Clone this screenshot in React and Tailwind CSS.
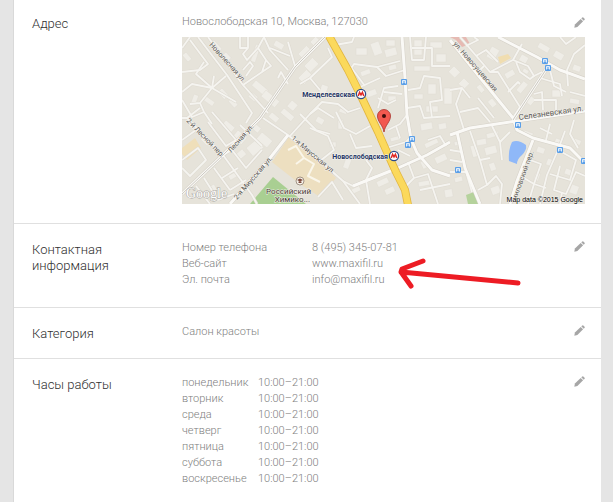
const hours = [
    "понедельник",
    "вторник",
    "среда",
    "четверг",
    "пятница",
    "суббота",
    "воскресенье"
];

const roads = [
    "M182 48 L190 37 M190 40 L208 64 L200 70 L182 72",
    "M208 37 L243 85 L268 113",
    "M198 37 L227 75 L252 113 L246 123",
    "M204 62 L196 74 L212 88 L226 76",
    "M182 92 L192 84 L212 88 L236 102 M212 88 L200 103 L190 104 M212 88 L214 76",
    "M182 100 L192 117 L204 112 L212 124 M200 103 L204 112",
    "M240 37 V48 H248 V37 M248 48 L243 54 L247 60 L258 48 L264 37",
    "M243 85 L262 72 L271 66 L266 60 M258 48 L266 60 L262 72",
    "M243 70 L250 62 L253 66 L246 76",
    "M264 37 L270 50 L288 70 M278 78 L281 72 L288 84",
    "M270 48 L290 56 M288 42 L295 66",
    "M182 118 L187 118 L223 155 L252 195 L257 204",
    "M187 118 L200 108 M182 140 L196 130 L214 146",
    "M182 160 L198 148 L206 160 L190 176 L182 168",
    "M208 122 L226 146 L236 140 L212 112",
    "M223 155 L232 150 L246 168 L262 150",
    "M214 168 L230 190 M204 178 L218 200 M196 186 L210 204",
    "M222 178 L238 168 M230 190 L246 180 M218 200 L234 194",
    "M240 125 L262 146 M263 118 L288 135 L320 161 L343 181 L360 204",
    "M290 136 L310 114 L318 108 L334 118 M300 114 L316 130 L330 134",
    "M310 78 L332 57 L328 48 M320 90 L310 78 L300 84",
    "M310 114 L322 102 L338 104 L348 112 L360 108",
    "M336 112 L344 128 L356 134 L370 126",
    "M310 128 L328 136 L334 150 L320 161",
    "M343 181 L353 186 L376 176 M350 134 L356 148 L372 146",
    "M366 160 L372 168 L366 180 L370 204",
    "M318 197 L332 182 L343 200",
    "M348 73 L354 64 L377 67 L400 61 M358 88 L380 78 M350 66 L365 86",
    "M335 45 L352 42 L354 37 M377 67 L386 76 L405 70",
    "M378 108 L384 88 L398 86 M384 92 L402 94 M378 98 L388 104 L396 100",
    "M410 37 L412 60 L424 60 L426 37 M412 48 H432 V66 H450",
    "M408 90 L420 88 L424 76 L440 78 L442 100 L430 102 L432 118",
    "M407 108 L420 106 L424 118 L450 116 M388 130 L400 124 L407 115",
    "M386 148 L406 142 L410 138 M398 150 L410 156 M396 126 L400 138",
    "M408 162 L414 178 L406 186 L410 204 M414 178 L428 174 L438 204",
    "M420 190 L450 184 M428 140 L440 136 L446 146",
    "M460 37 L490 72 L498 72 L520 107 L513 118",
    "M466 46 L478 40 L474 37 M476 56 L486 50 L498 62",
    "M490 72 L513 60 L522 44",
    "M513 60 L528 66 L534 76 L530 79 L520 72 L516 62",
    "M532 77 L542 72 M484 66 L478 72 L494 86",
    "M508 92 L518 82 L520 84 M534 94 L542 92 L543 110 M534 100 H556 V112 M550 70 L554 86 L566 92",
    "M585 45 L574 54 L567 70 L568 86 M560 37 L566 44 L576 37",
    "M540 78 L560 84 L562 96 M570 92 L585 96",
    "M450 90 L462 88 L456 104 L464 130 M462 88 L470 98 M478 98 L494 118",
    "M460 112 L478 108 L490 122",
    "M470 131 L480 160 L487 185 L496 176 L502 184 L500 204",
    "M487 185 L478 190 M480 160 L490 158 M450 150 L462 152 M450 160 L462 162 M450 172 L466 172 L472 192",
    "M492 126 L500 142 L510 132 M500 142 L502 160",
    "M565 131 L558 150 L547 175 L540 204 M558 150 L576 160 L570 180 L550 174",
    "M530 160 L541 164 L534 184 L546 188 M524 178 L534 184 L528 204",
    "M540 128 L552 134 M550 124 L546 140 M574 120 L570 134 L578 148",
    "M560 166 L554 190 L566 194 L576 172 L585 176 M562 192 L560 204"
];

const mainRoads = [
    "M325 37 L295 67 L260 118 L223 155 L182 194",
    "M288 135 L270 158 L230 204",
    "M353 186 L398 168 L427 155 L450 142",
    "M402 37 L405 78 L407 115 L411 139 L417 153 L432 170 L450 176",
    "M450 135 L470 128 L517 121 L585 111",
    "M450 40 L482 80 L513 118 L517 130 L533 138 L570 148 L585 163",
    "M498 37 L537 57 L560 70 L585 79",
    "M457 132 L465 168 L480 204",
    "M547 68 L513 120",
    "M533 140 L517 181 L510 204"
];

// x, y, width, height, rotation
const buildings = [
    [186, 52, 9, 5, 50], [214, 40, 12, 5, 48], [226, 52, 8, 6, 48], [256, 44, 5, 18, 18],
    [222, 88, 10, 6, 48], [232, 98, 9, 5, 48], [194, 94, 5, 10, 20], [206, 96, 11, 5, 35],
    [256, 80, 16, 7, 40], [266, 90, 18, 8, 40], [252, 92, 8, 6, 40], [276, 40, 10, 6, 30],
    [298, 54, 12, 7, -45], [304, 66, 12, 9, -45], [298, 78, 12, 9, -45], [310, 42, 8, 5, -45],
    [284, 108, 14, 6, 40], [272, 112, 10, 6, 40], [292, 100, 8, 8, 40], [322, 84, 7, 12, 20],
    [192, 122, 9, 5, 45], [204, 136, 9, 5, 45], [226, 120, 12, 7, 40], [238, 130, 12, 9, 40],
    [246, 148, 14, 11, -40], [262, 132, 14, 9, 40], [236, 154, 8, 7, -40], [256, 124, 7, 6, 40],
    [200, 190, 8, 5, 60], [214, 184, 8, 4, 60], [228, 176, 9, 5, -30], [240, 184, 8, 4, -30],
    [318, 116, 8, 6, 30], [338, 120, 5, 9, 0], [330, 142, 6, 5, 0], [346, 158, 6, 10, 20],
    [350, 190, 10, 5, -25], [376, 182, 12, 6, -25], [384, 190, 10, 6, -25], [340, 108, 8, 4, 20],
    [356, 48, 11, 7, 0], [370, 44, 9, 13, -20], [384, 50, 12, 8, -15], [386, 40, 9, 6, 0],
    [360, 72, 10, 5, -20], [388, 66, 8, 5, -15], [366, 92, 10, 6, -20], [388, 96, 8, 5, 0],
    [414, 40, 8, 15, 0], [430, 42, 12, 6, 0], [436, 54, 10, 8, 0], [414, 66, 16, 5, 0],
    [414, 94, 9, 5, 0], [428, 84, 8, 10, 0], [444, 88, 8, 16, 0], [426, 106, 12, 6, 0],
    [420, 124, 12, 7, -10], [438, 124, 8, 6, -10], [390, 138, 10, 4, -15], [424, 144, 14, 5, -25],
    [420, 162, 6, 8, -25], [434, 158, 12, 7, -25], [418, 182, 12, 5, -10], [444, 190, 8, 8, -10],
    [466, 54, 8, 6, 45], [492, 46, 9, 12, 30], [480, 84, 8, 5, 50], [492, 98, 8, 6, 50],
    [504, 74, 10, 6, -30], [522, 54, 8, 7, 30], [516, 90, 12, 6, -50], [524, 68, 6, 4, 30],
    [540, 42, 12, 6, 30], [556, 50, 10, 7, 30], [574, 64, 8, 6, 20], [552, 90, 9, 7, 0],
    [570, 98, 10, 5, 10], [526, 102, 8, 6, -50], [454, 66, 9, 8, 45], [464, 78, 8, 8, 45],
    [476, 140, 10, 6, -10], [486, 134, 12, 5, -15], [484, 148, 12, 8, -15], [494, 162, 8, 6, 70],
    [490, 188, 9, 8, -20], [470, 146, 5, 12, -15], [524, 130, 10, 5, 20], [538, 146, 8, 6, 20],
    [548, 158, 6, 7, 20], [566, 168, 7, 6, 20], [572, 184, 8, 9, 20], [536, 172, 5, 8, 20],
    [556, 138, 6, 7, 20], [574, 138, 8, 5, 20], [454, 178, 8, 5, -15], [454, 142, 7, 4, -10]
];

const stops = [
    [404, 82], [545, 61], [548, 68], [518, 125], [412, 139],
    [408, 145], [560, 150], [458, 170], [584, 161]
];

// text, x, y, rotation, font size
const streets = [
    ["Новолесная ул.", 209, 45, 48, 7],
    ["ул. Новосущевская", 453, 44, 49, 7],
    ["Селезневская ул.", 519, 120, -8, 8],
    ["2-й Лесной пер.", 186, 121, 46, 7],
    ["Лесная ул.", 231, 153, -49, 7],
    ["2-я Миусская ул.", 237, 200, -49, 7],
    ["1-я Миусская ул.", 291, 139, 40, 7],
    ["миловский пер.", 516, 201, -70, 7]
];

function Metro({ x, y }) {
    return (
        <g>
            <circle cx={x} cy={y} r="4.6" fill="#fff" stroke="#2b4a8b" strokeWidth="1.2" />
            <path
                d={`M${x - 2.8} ${y + 2} L${x - 1.4} ${y - 1.6} L${x} ${y + 1} L${x + 1.4} ${y - 1.6} L${x + 2.8} ${y + 2}`}
                fill="none"
                stroke="#e02b26"
                strokeWidth="1.5"
            />
        </g>
    );
}

function Map() {
    return (
        <svg
            viewBox="182 37 403 167"
            className="mt-[7px] block w-full font-['Roboto','Noto_Sans',sans-serif] font-normal"
            role="img"
            aria-label="Карта"
        >
            <rect x="182" y="37" width="403" height="167" fill="#e6e3da" />

            <path d="M450 37 H466 L470 44 L462 47 L456 40 Z" fill="#e6bab3" />
            <path d="M498 57 L508 54 L511 58 L500 64 Z" fill="#f0ddb0" />
            <path d="M182 148 L195 138 L201 148 L187 160 L182 154 Z" fill="#efdfba" />
            <path d="M289 137 L320 162 L336 178 L320 197 L300 184 L272 162 Z" fill="#eddfc0" />
            <path d="M273 177 L250 204 H306 Z" fill="#a9cf92" />
            <path d="M466 195 L474 192 L479 204 H468 Z" fill="#b5d29c" />

            <g fill="#efede7" stroke="#e0dcd3" strokeWidth="0.5">
                {buildings.map(([x, y, w, h, r], i) => (
                    <rect key={i} x={x} y={y} width={w} height={h} transform={`rotate(${r} ${x} ${y})`} />
                ))}
            </g>

            <g fill="none" strokeLinejoin="round">
                <g stroke="#dedad1" strokeWidth="3">
                    {roads.map((d) => <path key={d} d={d} />)}
                </g>
                <g stroke="#d5d1c8" strokeWidth="4">
                    {mainRoads.map((d) => <path key={d} d={d} />)}
                </g>
                <g stroke="#f5f4f0" strokeWidth="1.8">
                    {roads.map((d) => <path key={d} d={d} />)}
                </g>
                <g stroke="#faf9f6" strokeWidth="3">
                    {mainRoads.map((d) => <path key={d} d={d} />)}
                </g>
                <path d="M288 150 L296 146 L304 158 L296 164 M304 158 L314 164 L308 176 L320 182" stroke="#faf6ea" strokeWidth="2" />
                <path d="M325 37 L295 67 L260 118 L223 155 L182 194 M547 68 L513 120" stroke="#cbc8c0" strokeWidth="1" />
                <path d="M329 36 L348 70 L361 96 L378 132 L386 150 L396 172 L405 190 L408 205" stroke="#e2b63f" strokeWidth="8" />
                <path d="M329 36 L348 70 L361 96 L378 132 L386 150 L396 172 L405 190 L408 205" stroke="#fbd95c" strokeWidth="6.4" />
            </g>

            <path d="M512 142 Q518 139 526 145 Q527 150 522 155 Q517 159 517 164 L509 161 Q508 150 512 142 Z" fill="#8fb8f8" />

            {stops.map(([x, y]) => (
                <g key={`${x}-${y}`}>
                    <rect x={x - 3} y={y - 3} width="6" height="6" rx="1" fill="#5a9fe8" />
                    <path d={`M${x - 1.5} ${y + 1.5} V${y - 1.5} H${x + 1.5} V${y + 1.5} M${x - 1.5} ${y} H${x + 1.5}`} fill="none" stroke="#fff" strokeWidth="0.8" />
                </g>
            ))}

            <g fill="#5a5854" stroke="#f3f1ec" strokeWidth="1" paintOrder="stroke">
                {streets.map(([text, x, y, r, size]) => (
                    <text key={text} x={x} y={y} fontSize={size} transform={`rotate(${r} ${x} ${y})`}>
                        {text}
                    </text>
                ))}
            </g>

            <g fill="#1f3564" stroke="#f7f6f2" strokeWidth="1" paintOrder="stroke" fontSize="7" fontWeight="700" textAnchor="end">
                <text x="355" y="97">Менделеевская</text>
                <text x="388" y="159">Новослободская</text>
            </g>
            <Metro x={361} y={94} />
            <Metro x={394} y={156} />

            <circle cx="300" cy="181" r="4" fill="#f8f4ec" stroke="#8d7b6d" strokeWidth="0.8" />
            <path d="M297 180 L300 178.500 L303 180 L300 181.500 Z M298.500 181.500 H301.500 V183 H298.500 Z" fill="#7d4a3c" />
            <g fill="#4b3a33" stroke="#f3f1ec" strokeWidth="1" paintOrder="stroke" fontSize="8" textAnchor="end">
                <text x="311" y="194">Российский</text>
                <text x="310" y="202">Химико...</text>
            </g>

            <path d="M384 132 C383 125 377.500 122 377.500 116 A6.500 6.500 0 0 1 390.500 116 C390.500 122 385 125 384 132 Z" fill="#f2594f" stroke="#a8312b" strokeWidth="0.8" />
            <circle cx="384" cy="116" r="2" fill="#3d0f0c" />

            <text x="186" y="198" fontSize="14" fill="#fff" stroke="#aaa8a2" strokeWidth="1" paintOrder="stroke" className="font-['Liberation_Serif',serif]">
                Google
            </text>
            <text x="583" y="202" fontSize="7" textAnchor="end" fill="#000" stroke="#f3f1ec" strokeWidth="1" paintOrder="stroke" className="font-['Liberation_Sans',sans-serif]">
                Map data ©2015 Google
            </text>
        </svg>
    );
}

function EditButton({ label }) {
    return (
        <button type="button" aria-label={`Изменить: ${label}`} className="absolute right-4 top-[17px] cursor-pointer">
            <svg viewBox="0 0 11 11" className="block size-[11px]" fill="#a6a6a6">
                <path d="M0.300 10.700 L0.900 7.600 L6.700 1.900 L9.100 4.300 L3.400 10.100 Z" />
                <path d="M7.300 1.300 L8.300 0.400 Q8.800 0 9.300 0.400 L10.600 1.700 Q11 2.200 10.600 2.700 L9.700 3.700 Z" />
            </svg>
        </button>
    );
}

function Section({ title, children }) {
    return (
        <section className="relative flex border-b border-[#e0e0e0] pt-4 pb-[15px] pl-[18px] pr-4 first:pt-[14px] first:pb-4 last:border-b-0 last:pb-3">
            <h2 className="w-[150px] shrink-0 pt-[2px] pr-8 text-[13px] leading-4 text-[#303030]">
                {title}
            </h2>
            <div className="min-w-0 flex-1 pb-[3px] text-[11px] leading-4 text-[#808080]">{children}</div>
            <EditButton label={title} />
        </section>
    );
}

export default function App() {
    return (
        <div className="min-h-screen bg-[#e5e5e5] pl-[13px] pr-3 font-['Roboto','Noto_Sans',sans-serif] font-light">
            <main className="min-h-screen border-l border-[#d9d9d9] bg-white">
                <Section title="Адрес">
                    <p>Новослободская 10, Москва, 127030</p>
                    <Map />
                </Section>

                <Section title="Контактная информация">
                    <dl className="grid grid-cols-[130px_1fr] pb-px">
                        <dt>Номер телефона</dt>
                        <dd>8 (495) 345-07-81</dd>
                        <dt>Веб-сайт</dt>
                        <dd><a href="http://www.maxifil.ru">www.maxifil.ru</a></dd>
                        <dt>Эл. почта</dt>
                        <dd><a href="mailto:info@maxifil.ru">info@maxifil.ru</a></dd>
                    </dl>
                    <svg
                        viewBox="0 0 124 32"
                        className="pointer-events-none absolute left-96 top-[34px] h-8 w-[124px]"
                        fill="none"
                        stroke="#ed1c24"
                        strokeWidth="5"
                        strokeLinecap="round"
                        strokeLinejoin="round"
                    >
                        <path d="M120 25 L3 14 M25 3 L4 11 L3 14 L13 28" />
                    </svg>
                </Section>

                <Section title="Категория">
                    <p>Салон красоты</p>
                </Section>

                <Section title="Часы работы">
                    <table>
                        <tbody>
                            {hours.map((day) => (
                                <tr key={day}>
                                    <th scope="row" className="w-[76px] text-left font-light">{day}</th>
                                    <td>10:00–21:00</td>
                                </tr>
                            ))}
                        </tbody>
                    </table>
                </Section>
            </main>
        </div>
    );
}
